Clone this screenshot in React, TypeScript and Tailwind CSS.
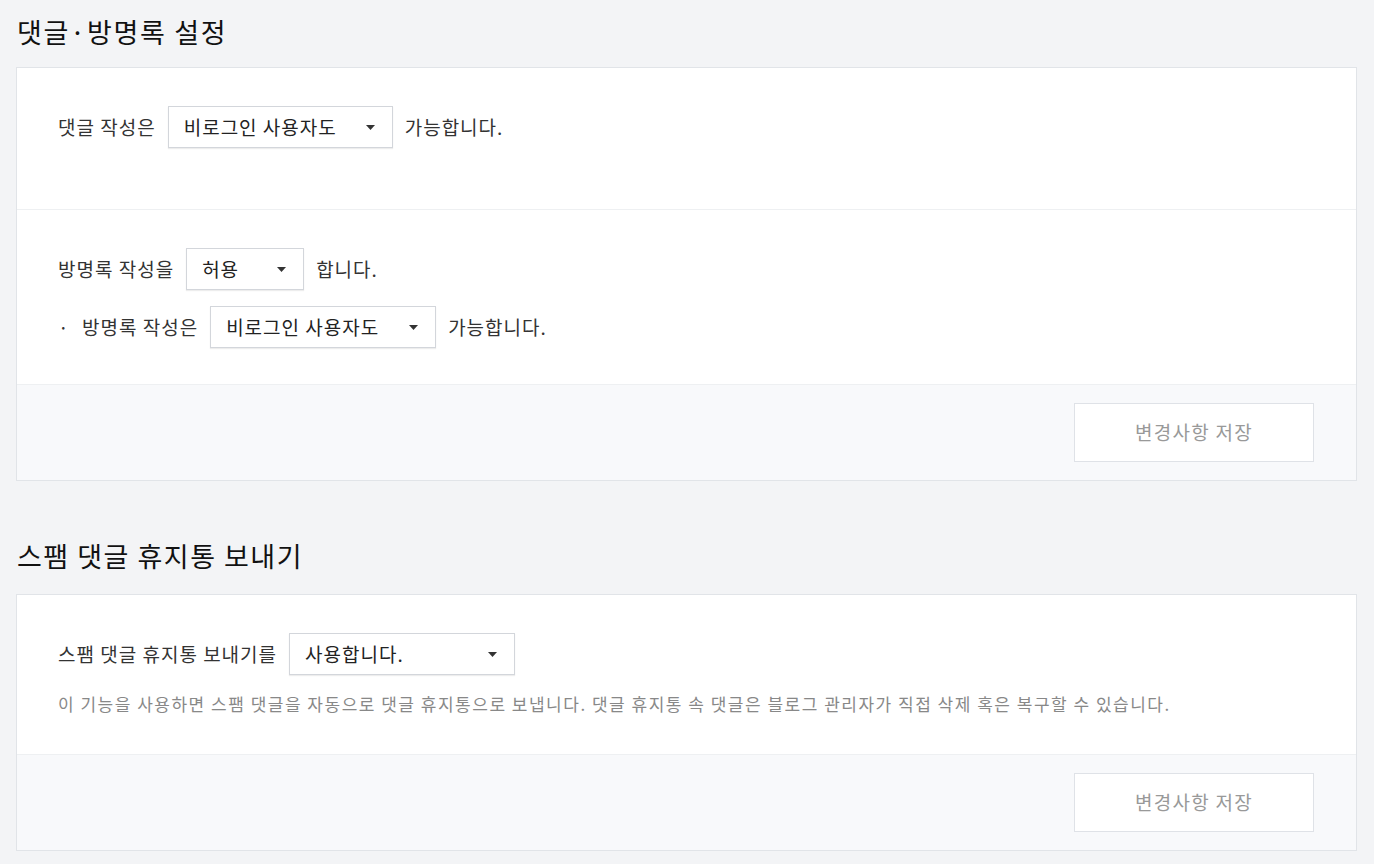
import React from 'react';

const FONT = "font-['Noto_Sans_CJK_KR','Noto_Sans',sans-serif]";

const Caret = () => (
  <svg width="9" height="5" viewBox="0 0 9 5" className="shrink-0">
    <path d="M0 0h9L4.5 5z" fill="#333" />
  </svg>
);

const Select = ({ value, width }: { value: string; width: string }) => (
  <div
    className={`${width} h-[42px] mx-[12px] flex items-center justify-between pl-[15px] pr-[17px] bg-white border border-[#d3d6db] shadow-[0_1px_1px_rgba(0,0,0,0.07)] text-[19px] tracking-[1px] text-[#222]`}
  >
    <span>{value}</span>
    <Caret />
  </div>
);

const SaveBar = () => (
  <div className="bg-[#f8f9fb] flex justify-end pt-[18px] pb-[18px] pr-[42px]">
    <button className="w-[240px] h-[59px] bg-white border border-[#dfe2e7] text-[19px] tracking-[1.3px] text-[#999]">
      변경사항 저장
    </button>
  </div>
);

export default function App() {
  return (
    <div className={`${FONT} min-h-screen bg-[#f3f4f6] pl-4 pr-[17px] pt-[12px] pb-[14px] text-[#333]`}>
      <h2 className="text-[27px] tracking-[1.7px] text-[#111] leading-[40px] pl-px">댓글·방명록 설정</h2>
      <div className="mt-[15px] bg-white border border-[#e1e4e8]">
        <div className="pl-[41px] pt-[38px] pb-[61px] border-b border-[#eef0f2]">
          <div className="flex items-center text-[19px] tracking-[1px]">
            <span>댓글 작성은</span>
            <Select value="비로그인 사용자도" width="w-[225px]" />
            <span>가능합니다.</span>
          </div>
        </div>
        <div className="pl-[41px] pt-[38px] pb-[36px] border-b border-[#eef0f2]">
          <div className="flex items-center text-[19px] tracking-[1px]">
            <span>방명록 작성을</span>
            <Select value="허용" width="w-[118px]" />
            <span>합니다.</span>
          </div>
          <div className="flex items-center text-[19px] tracking-[1px] mt-[16px]">
            <span className="w-[24px]">·</span>
            <span>방명록 작성은</span>
            <Select value="비로그인 사용자도" width="w-[226px]" />
            <span>가능합니다.</span>
          </div>
        </div>
        <SaveBar />
      </div>

      <h2 className="mt-[55px] text-[27px] tracking-[1.5px] text-[#111] leading-[40px] pl-px">스팸 댓글 휴지통 보내기</h2>
      <div className="mt-[18px] bg-white border border-[#e1e4e8]">
        <div className="pl-[41px] pt-[38px] pb-[37px] border-b border-[#eef0f2]">
          <div className="flex items-center text-[19px] tracking-[1px]">
            <span>스팸 댓글 휴지통 보내기를</span>
            <Select value="사용합니다." width="w-[226px]" />
          </div>
          <p className="mt-[16px] text-[17px] tracking-[1.5px] leading-[26px] text-[#888]">
            이 기능을 사용하면 스팸 댓글을 자동으로 댓글 휴지통으로 보냅니다. 댓글 휴지통 속 댓글은 블로그 관리자가 직접 삭제 혹은 복구할 수 있습니다.
          </p>
        </div>
        <SaveBar />
      </div>
    </div>
  );
}
